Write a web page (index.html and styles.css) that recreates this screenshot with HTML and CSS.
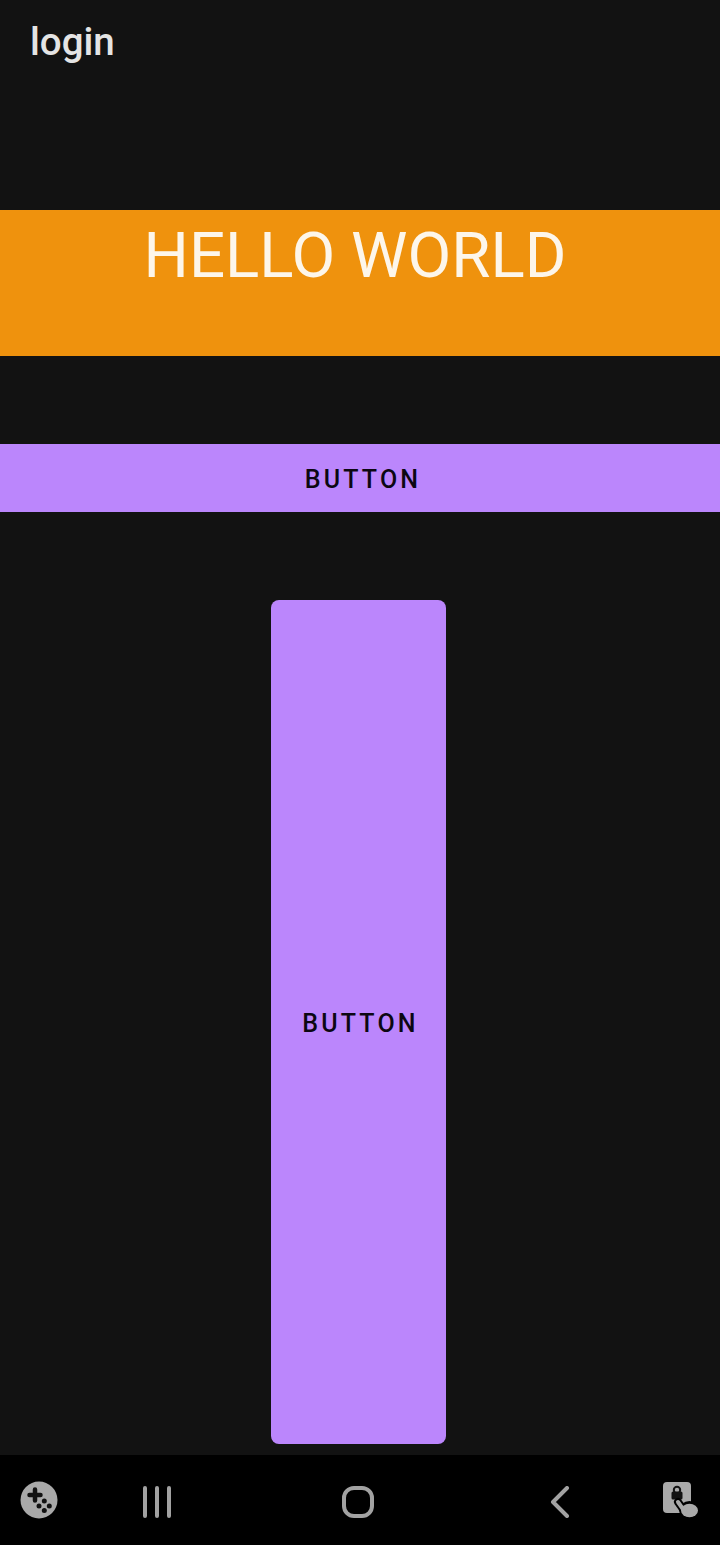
FILE: index.html
```html
<!DOCTYPE html>
<html lang="en">
<head>
  <meta charset="UTF-8">
  <title>login</title>
  <link rel="stylesheet" href="styles.css">
</head>
<body>

  <div class="screen">
    <header class="app-bar">login</header>

    <main class="content">
      <h1 class="banner">HELLO WORLD</h1>
      <button class="btn btn-wide" type="button">BUTTON</button>
      <button class="btn btn-tall" type="button">BUTTON</button>
    </main>

    <nav class="nav-bar">
      <!-- game launcher -->
      <svg class="nav-icon icon-game" viewBox="0 0 38 38">
        <circle cx="19" cy="19" r="18.500" fill="#a9a9a9"/>
        <path d="M15 8.500v11M9.500 14h11" stroke="#111" stroke-width="4.500" stroke-linecap="round" fill="none"/>
        <circle cx="24.300" cy="20" r="2.500" fill="#111"/>
        <circle cx="19" cy="25" r="2.500" fill="#111"/>
        <circle cx="29.300" cy="25" r="2.500" fill="#111"/>
        <circle cx="24.300" cy="29.500" r="2.500" fill="#111"/>
      </svg>
      <!-- recents -->
      <svg class="nav-icon icon-recents" viewBox="0 0 30 32">
        <path d="M3 2v28M15 2v28M27 2v28" stroke="#a2a2a2" stroke-width="4" stroke-linecap="round" fill="none"/>
      </svg>
      <!-- home -->
      <svg class="nav-icon icon-home" viewBox="0 0 32 32">
        <rect x="2" y="2" width="28" height="28" rx="10" fill="none" stroke="#a2a2a2" stroke-width="4"/>
      </svg>
      <!-- back -->
      <svg class="nav-icon icon-back" viewBox="0 0 20 32">
        <path d="M17 2L3 16l14 14" fill="none" stroke="#a2a2a2" stroke-width="4" stroke-linecap="round" stroke-linejoin="round"/>
      </svg>
      <!-- touch lock -->
      <svg class="nav-icon icon-lock" viewBox="0 0 36 36">
        <rect x="0" y="0" width="28" height="31" rx="4" fill="#a9a9a9"/>
        <circle cx="14" cy="8" r="3.200" fill="none" stroke="#111" stroke-width="2"/>
        <rect x="8.500" y="9.500" width="11" height="8" rx="1.500" fill="#111"/>
        <ellipse cx="26.500" cy="28" rx="10.500" ry="9" fill="#000"/>
        <path d="M15 20l7 10" stroke="#000" stroke-width="8" stroke-linecap="round"/>
        <ellipse cx="26.500" cy="28.500" rx="8.500" ry="6.800" fill="#a9a9a9"/>
        <path d="M15 20l7 10" stroke="#a9a9a9" stroke-width="4" stroke-linecap="round"/>
      </svg>
    </nav>
  </div>

</body>
</html>
```

FILE: styles.css
```css
* {
  margin: 0;
  padding: 0;
  box-sizing: border-box;
  font-family: "Roboto", sans-serif;
}

body {
  background: #121212;
}

.screen {
  width: 720px;
  height: 1545px;
  display: flex;
  flex-direction: column;
  overflow: hidden;
}

.app-bar {
  height: 84px;
  padding: 0 0 2px 30px;
  display: flex;
  align-items: center;
  font-size: 38.500px;
  font-weight: 500;
  color: #e4e4e4;
}

.content {
  flex: 1;
  padding-top: 126px;
  display: flex;
  flex-direction: column;
  align-items: flex-start;
}

.banner {
  width: 100%;
  height: 146px;
  padding: 9px 10px 0 0;
  background: #ef920d;
  color: #fdf6ea;
  font-size: 63.600px;
  font-weight: 400;
  line-height: 74px;
  text-align: center;
}

.btn {
  border: none;
  background: #bb86fc;
  color: #0c0712;
  font-size: 25px;
  font-weight: 500;
  letter-spacing: 3.200px;
}

.btn-wide {
  width: 100%;
  height: 68px;
  margin-top: 88px;
  padding: 2px 0 0 6px;
}

.btn-tall {
  width: 175px;
  height: 844px;
  margin: 88px 0 0 271px;
  padding: 2px 0 0 4px;
  border-radius: 8px;
}

.nav-bar {
  height: 90px;
  background: #000;
  position: relative;
  flex-shrink: 0;
}

/* nav buttons sit at fixed spots on the bar, not evenly spaced */
.nav-icon {
  position: absolute;
}

.icon-game {
  left: 20px;
  top: 26px;
  width: 38px;
  height: 38px;
}

.icon-recents {
  left: 142px;
  top: 31px;
  width: 30px;
  height: 32px;
}

.icon-home {
  left: 342px;
  top: 31px;
  width: 32px;
  height: 32px;
}

.icon-back {
  left: 550px;
  top: 31px;
  width: 20px;
  height: 32px;
}

.icon-lock {
  left: 663px;
  top: 27px;
  width: 36px;
  height: 36px;
}
```
